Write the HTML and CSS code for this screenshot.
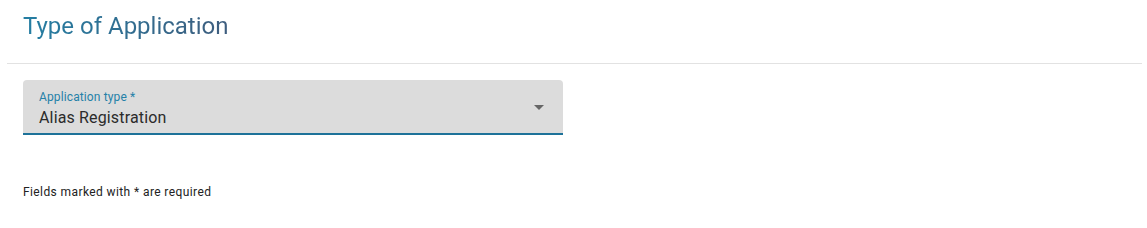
FILE: index.html
```html
<!DOCTYPE html>
<html lang="en">
<head>
  <meta charset="UTF-8">
  <meta name="viewport" content="width=device-width, initial-scale=1.0">
  <title>Type of Application</title>
  <link rel="stylesheet" href="styles.css">
</head>
<body>
  <div class="card">
    <div class="card-header">
      <h2 class="title">Type of Application</h2>
    </div>
    <div class="card-body">
      <div class="field">
        <div class="field-text">
          <label class="field-label">Application type *</label>
          <div class="field-value">Alias Registration</div>
        </div>
        <span class="caret"></span>
      </div>
      <p class="hint">Fields marked with * are required</p>
    </div>
  </div>
</body>
</html>
```

FILE: styles.css
```css
body {
  margin: 0;
  font-family: Roboto, "Liberation Sans", sans-serif;
  background: #fff;
}

.card {
  margin: 0 5px 0 7px;
}

.card-header {
  height: 63px;
  border-bottom: 1px solid #e2e2e2;
  padding-left: 16px;
  box-sizing: content-box;
}

.title {
  margin: 0;
  padding-top: 12px;
  font-size: 24px;
  font-weight: 400;
  line-height: 28px;
  background: linear-gradient(90deg, #247ea3, #3e5d7e);
  -webkit-background-clip: text;
  background-clip: text;
  color: transparent;
  display: inline-block;
}

.card-body {
  padding: 16px 16px 0;
}

.field {
  width: 540px;
  height: 53px;
  background: #dcdcdc;
  border-radius: 4px 4px 0 0;
  border-bottom: 2px solid #1d7299;
  display: flex;
  align-items: flex-start;
}

.field-text {
  flex: 1;
  padding: 9px 16px 0;
}

.field-label {
  display: block;
  font-size: 12px;
  line-height: 16px;
  letter-spacing: 0.12px;
  color: #2581a8;
}

.field-value {
  font-size: 16px;
  line-height: 25px;
  letter-spacing: 0.15px;
  color: #2b2b2b;
}

.caret {
  align-self: center;
  width: 0;
  height: 0;
  border-left: 5px solid transparent;
  border-right: 5px solid transparent;
  border-top: 5px solid #666;
  margin: 2px 19px 0 0;
}

.hint {
  margin: 49px 0 0;
  font-size: 12px;
  line-height: 16px;
  letter-spacing: 0.4px;
  color: #222;
}
```
